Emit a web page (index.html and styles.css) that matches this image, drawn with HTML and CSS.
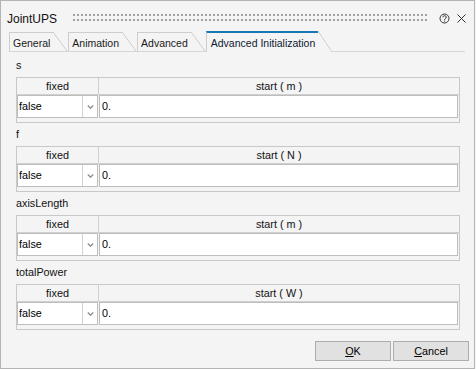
FILE: index.html
```html
<!DOCTYPE html>
<html>
<head>
<meta charset="utf-8">
<link rel="stylesheet" href="styles.css">
</head>
<body>
<div class="window">
  <div class="titlebar">
    <span class="title">JointUPS</span>
    <svg class="grip" height="8" preserveAspectRatio="none">
      <defs>
        <pattern id="dots" width="4" height="5" patternUnits="userSpaceOnUse">
          <rect width="2" height="2" fill="#a0a0a0"/>
        </pattern>
      </defs>
      <rect width="100%" height="7" fill="url(#dots)"/>
    </svg>
    <svg class="help" width="11" height="11" viewBox="0 0 11 11">
      <circle cx="5.5" cy="5.5" r="4.5" fill="none" stroke="#333" stroke-width="1"/>
      <path d="M3.9 4.3 A1.65 1.65 0 1 1 6.3 5.8 C5.7 6.1 5.5 6.4 5.5 7" fill="none" stroke="#333" stroke-width="1"/>
      <rect x="5" y="7.6" width="1" height="1" fill="#333"/>
    </svg>
    <svg class="close" width="9" height="9" viewBox="0 0 9 9">
      <path d="M0.5 0.5 L8.5 8.5 M8.5 0.5 L0.5 8.5" stroke="#333" stroke-width="1"/>
    </svg>
  </div>

  <div class="tabbar">
    <div class="tab"><span class="tab-label">General</span><span class="tab-slant"></span></div>
    <div class="tab"><span class="tab-label">Animation</span><span class="tab-slant"></span></div>
    <div class="tab"><span class="tab-label">Advanced</span><span class="tab-slant"></span></div>
    <div class="tab tab-active"><span class="tab-label">Advanced Initialization</span><span class="tab-slant"></span></div>
  </div>

  <div class="pane">
    <section class="param">
      <div class="param-label">s</div>
      <div class="grid">
        <div class="grid-head"><div class="th th-fixed">fixed</div><div class="th">start ( m )</div></div>
        <div class="grid-row">
          <div class="combo"><span class="combo-value">false</span><span class="combo-arrow"><svg width="7" height="4" viewBox="0 0 7 4"><path d="M0.8 0.5 L3.5 3.2 L6.2 0.5" fill="none" stroke="#8c8c8c" stroke-width="1.3"/></svg></span></div>
          <div class="lineedit">0.</div>
        </div>
      </div>
    </section>
    <section class="param">
      <div class="param-label">f</div>
      <div class="grid">
        <div class="grid-head"><div class="th th-fixed">fixed</div><div class="th">start ( N )</div></div>
        <div class="grid-row">
          <div class="combo"><span class="combo-value">false</span><span class="combo-arrow"><svg width="7" height="4" viewBox="0 0 7 4"><path d="M0.8 0.5 L3.5 3.2 L6.2 0.5" fill="none" stroke="#8c8c8c" stroke-width="1.3"/></svg></span></div>
          <div class="lineedit">0.</div>
        </div>
      </div>
    </section>
    <section class="param">
      <div class="param-label">axisLength</div>
      <div class="grid">
        <div class="grid-head"><div class="th th-fixed">fixed</div><div class="th">start ( m )</div></div>
        <div class="grid-row">
          <div class="combo"><span class="combo-value">false</span><span class="combo-arrow"><svg width="7" height="4" viewBox="0 0 7 4"><path d="M0.8 0.5 L3.5 3.2 L6.2 0.5" fill="none" stroke="#8c8c8c" stroke-width="1.3"/></svg></span></div>
          <div class="lineedit">0.</div>
        </div>
      </div>
    </section>
    <section class="param">
      <div class="param-label">totalPower</div>
      <div class="grid">
        <div class="grid-head"><div class="th th-fixed">fixed</div><div class="th">start ( W )</div></div>
        <div class="grid-row">
          <div class="combo"><span class="combo-value">false</span><span class="combo-arrow"><svg width="7" height="4" viewBox="0 0 7 4"><path d="M0.8 0.5 L3.5 3.2 L6.2 0.5" fill="none" stroke="#8c8c8c" stroke-width="1.3"/></svg></span></div>
          <div class="lineedit">0.</div>
        </div>
      </div>
    </section>
  </div>

  <div class="buttons">
    <button class="btn"><u>O</u>K</button>
    <button class="btn"><u>C</u>ancel</button>
  </div>
</div>
</body>
</html>
```

FILE: styles.css
```css
* { box-sizing: border-box; }

html, body {
  margin: 0;
  padding: 0;
  background: #f7f7f7;
}

body {
  font-family: "Liberation Sans", Arial, sans-serif;
  font-size: 10.8px;
  color: #111;
}

.window {
  width: 475px;
  height: 369px;
  border: 1px solid #b4b4b4;
  background: #f4f4f4;
  display: flex;
  flex-direction: column;
}

/* title bar */
.titlebar {
  height: 30px;
  display: flex;
  align-items: flex-start;
  padding-left: 6px;
  padding-right: 8px;
}

.title {
  font-size: 12px;
  line-height: 14px;
  margin-top: 11px;
  color: #111;
}

.grip {
  flex: 1;
  margin-top: 13px;
  margin-left: 16px;
  margin-right: 11px;
}

.help {
  margin-top: 12px;
  margin-right: 7px;
}

.close {
  margin-top: 13px;
}

/* tabs */
.tabbar {
  height: 21px;
  display: flex;
  align-items: flex-end;
  margin-left: 8px;
  margin-right: 9px;
  background: linear-gradient(#d6d6d6, #d6d6d6) left bottom / 100% 1px no-repeat;
}

.tab {
  display: flex;
  margin-right: 1px;
}

.tab-label {
  border-left: 1px solid #cdcdcd;
  border-top: 1px solid #cdcdcd;
  padding: 2px 3px 1px 3px;
  font-size: 10.5px;
  line-height: 16px;
  color: #1a1a1a;
  white-space: nowrap;
}

.tab-slant {
  width: 14px;
  background: linear-gradient(to top right, transparent calc(50% - 0.7px), #c8c8c8 50%, transparent calc(50% + 0.7px));
  margin-bottom: 1px;
}

.tab-active {
  background: #f4f4f4;
}

.tab-active .tab-label {
  border-top: 2px solid #1778b8;
  color: #0f1a33;
  padding-left: 4px;
  padding-right: 3px;
  padding-bottom: 1px;
}

.tab-active .tab-slant {
  width: 14px;
  margin-bottom: 0;
}

/* pane */
.pane {
  flex: 1;
  padding: 6px 14px 0 15px;
}

.param-label {
  line-height: 14px;
  margin-bottom: 5px;
  color: #111;
}

.grid {
  height: 46px;
  border: 1px solid #c8c8c8;
  margin-bottom: 4px;
}

.grid-head {
  display: grid;
  grid-template-columns: 82px 1fr;
  height: 17px;
  border-bottom: 1px solid #d0d0d0;
}

.th {
  text-align: center;
  line-height: 16px;
  color: #111;
}

.th-fixed {
  border-right: 1px solid #d0d0d0;
}

.grid-row {
  display: flex;
  height: 23px;
  gap: 1px;
  padding-right: 1px;
}

.combo {
  width: 81px;
  display: flex;
  background: #fff;
  border: 1px solid #bdbdbd;
}

.combo-value {
  flex: 1;
  padding-left: 1px;
  line-height: 21px;
  color: #000;
}

.combo-arrow {
  width: 15px;
  border-left: 1px solid #d2d2d2;
  display: flex;
  align-items: center;
  justify-content: center;
}

.lineedit {
  flex: 1;
  background: #fff;
  border: 1px solid #bdbdbd;
  padding-left: 2px;
  line-height: 21px;
  color: #000;
}

/* buttons */
.buttons {
  display: flex;
  justify-content: flex-end;
  gap: 2px;
  padding: 0 5px 7px 0;
}

.btn {
  width: 76px;
  height: 20px;
  padding: 0;
  border: 1px solid #adadad;
  background: #e1e1e1;
  font-family: "Liberation Sans", Arial, sans-serif;
  font-size: 10.8px;
  color: #000;
  line-height: 18px;
}
```
